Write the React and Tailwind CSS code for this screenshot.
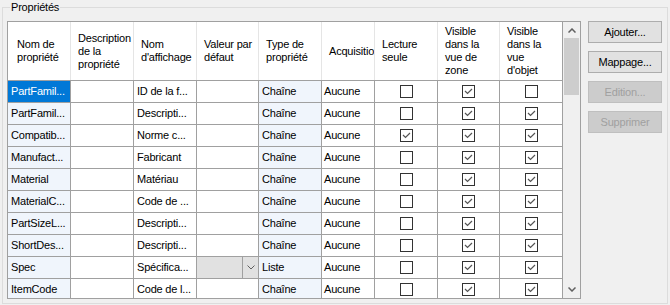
import React from 'react';

const widths = ['w-[63px]', 'w-[63px]', 'w-[63px]', 'w-[62px]', 'w-[63px]', 'w-[53px]', 'w-[63px]', 'w-[62px]', 'w-[63px]'];

const headers = [
    ['Nom de', 'propriété'],
    ['Description', 'de la', 'propriété'],
    ['Nom', "d'affichage"],
    ['Valeur par', 'défaut'],
    ['Type de', 'propriété'],
    ['Acquisition'],
    ['Lecture', 'seule'],
    ['Visible', 'dans la', 'vue de', 'zone'],
    ['Visible', 'dans la', 'vue', "d'objet"],
];

const rows = [
    { name: 'PartFamil...', label: 'ID de la f...', type: 'Chaîne', ro: false, zone: true, obj: false, selected: true },
    { name: 'PartFamil...', label: 'Descripti...', type: 'Chaîne', ro: false, zone: true, obj: true },
    { name: 'Compatib...', label: 'Norme c...', type: 'Chaîne', ro: true, zone: true, obj: true },
    { name: 'Manufact...', label: 'Fabricant', type: 'Chaîne', ro: false, zone: true, obj: true },
    { name: 'Material', label: 'Matériau', type: 'Chaîne', ro: false, zone: true, obj: true },
    { name: 'MaterialC...', label: 'Code de ...', type: 'Chaîne', ro: false, zone: true, obj: true },
    { name: 'PartSizeL...', label: 'Descripti...', type: 'Chaîne', ro: false, zone: true, obj: true },
    { name: 'ShortDes...', label: 'Descripti...', type: 'Chaîne', ro: false, zone: true, obj: true },
    { name: 'Spec', label: 'Spécifica...', type: 'Liste', ro: false, zone: true, obj: true, combo: true },
    { name: 'ItemCode', label: 'Code de l...', type: 'Chaîne', ro: false, zone: true, obj: true },
];

function Check({ checked }) {
    return (
        <span className="block w-[13px] h-[13px] border border-[#333333] bg-white">
            {checked && (
                <svg width="11" height="11" viewBox="0 0 11 11" className="block">
                    <polyline points="2,5 4.5,7.5 9,3" fill="none" stroke="#555555" strokeWidth="1.2" />
                </svg>
            )}
        </span>
    );
}

function Cell({ w, className = '', children }) {
    return (
        <div className={`${w} h-full shrink-0 border-r border-[#a0a0a0] overflow-hidden whitespace-nowrap flex items-center ${className}`}>
            {children}
        </div>
    );
}

function Button({ children, disabled }) {
    return (
        <div
            className={
                disabled
                    ? 'w-[74px] h-[22px] border border-[#bfbfbf] bg-[#cccccc] text-[#a0a0a0] flex items-center justify-center'
                    : 'w-[74px] h-[22px] border border-[#adadad] bg-[#e1e1e1] text-black flex items-center justify-center'
            }
        >
            {children}
        </div>
    );
}

export default function App() {
    return (
        <div className="w-[670px] h-[305px] bg-[#f0f0f0] pl-[2px] font-['Liberation_Sans',sans-serif] text-[11px] tracking-[-0.2px] text-black overflow-hidden">
            <fieldset className="w-[666px] h-[304px] border border-[#dcdcdc]">
                <legend className="ml-[7px] px-[1px] leading-[14px]">Propriétés</legend>
                <div className="flex mt-[7px] ml-[4px]">
                    <div className="w-[574px] h-[278px] border border-[#a0a0a0] bg-white flex overflow-hidden">
                        <div className="w-[555px] flex flex-col">
                            <div className="flex h-[59px] shrink-0 border-b border-[#a0a0a0]">
                                {headers.map((lines, i) => (
                                    <div
                                        key={i}
                                        className={`${widths[i]} h-full shrink-0 border-r ${i === 8 ? 'border-[#a0a0a0]' : 'border-[#e5e5e5]'} overflow-hidden whitespace-nowrap flex flex-col justify-center leading-[13px] ${i === 0 ? 'pl-[9px]' : 'pl-[7px]'}`}
                                    >
                                        {lines.map((l) => (
                                            <span key={l}>{l}</span>
                                        ))}
                                    </div>
                                ))}
                            </div>
                            {rows.map((r, i) => (
                                <div key={i} className="flex h-[22px] shrink-0 border-b border-[#a0a0a0]">
                                    <Cell w={widths[0]} className={r.selected ? 'bg-[#0078d7] text-white pl-[3px]' : 'bg-[#f0f5fc] pl-[3px]'}>
                                        {r.name}
                                    </Cell>
                                    <Cell w={widths[1]} />
                                    <Cell w={widths[2]} className="pl-[3px]">{r.label}</Cell>
                                    <Cell w={widths[3]} className={r.combo ? 'bg-[#e1e1e1] justify-end' : ''}>
                                        {r.combo && (
                                            <span className="w-[16px] h-full border-l border-[#a0a0a0] flex items-center justify-center">
                                                <svg width="8" height="5" viewBox="0 0 8 5">
                                                    <polyline points="0.5,0.5 4,4 7.5,0.5" fill="none" stroke="#606060" strokeWidth="1" />
                                                </svg>
                                            </span>
                                        )}
                                    </Cell>
                                    <Cell w={widths[4]} className="bg-[#f0f5fc] pl-[3px]">{r.type}</Cell>
                                    <Cell w={widths[5]} className="pl-[2px]">Aucune</Cell>
                                    <Cell w={widths[6]} className="justify-center"><Check checked={r.ro} /></Cell>
                                    <Cell w={widths[7]} className="justify-center"><Check checked={r.zone} /></Cell>
                                    <Cell w={widths[8]} className="justify-center"><Check checked={r.obj} /></Cell>
                                </div>
                            ))}
                        </div>
                        <div className="w-[17px] h-full bg-[#f0f0f0] flex flex-col items-center">
                            <div className="h-[16px] w-full flex items-center justify-center">
                                <svg width="8" height="5" viewBox="0 0 8 5">
                                    <polyline points="0.5,4.5 4,1 7.5,4.5" fill="none" stroke="#606060" strokeWidth="1.5" />
                                </svg>
                            </div>
                            <div className="w-[15px] h-[57px] bg-[#cdcdcd]" />
                            <div className="flex-1" />
                            <div className="h-[17px] w-full flex items-center justify-center">
                                <svg width="8" height="5" viewBox="0 0 8 5">
                                    <polyline points="0.5,0.5 4,4 7.5,0.5" fill="none" stroke="#606060" strokeWidth="1.5" />
                                </svg>
                            </div>
                        </div>
                    </div>
                    <div className="ml-[7px] flex flex-col gap-[8px]">
                        <Button>Ajouter...</Button>
                        <Button>Mappage...</Button>
                        <Button disabled>Edition...</Button>
                        <Button disabled>Supprimer</Button>
                    </div>
                </div>
            </fieldset>
        </div>
    );
}
